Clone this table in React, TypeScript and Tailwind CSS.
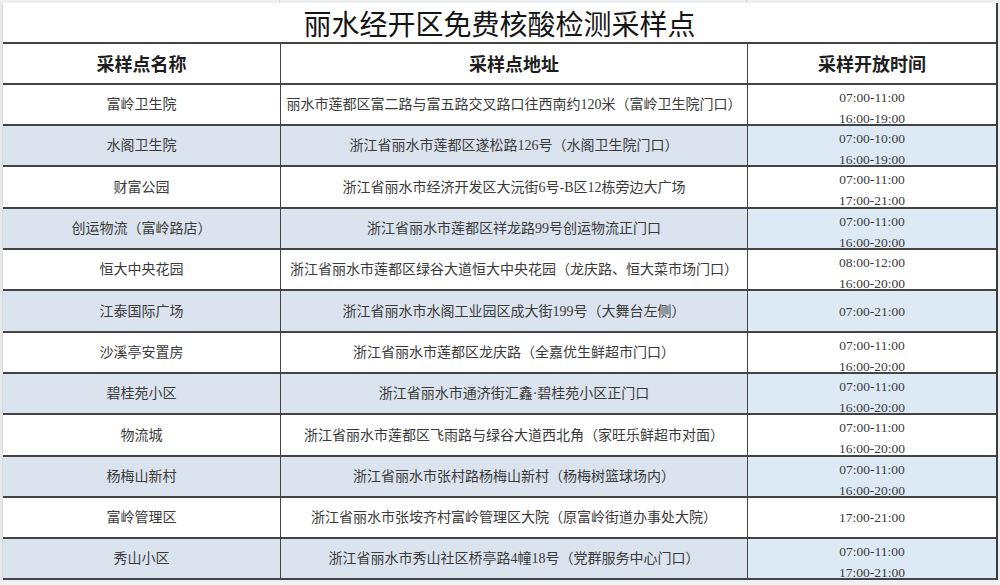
import React from "react";

type Row = { name: string; addr: string; times: string[] };

const rows: Row[] = [
  { name: "富岭卫生院", addr: "丽水市莲都区富二路与富五路交叉路口往西南约120米（富岭卫生院门口）", times: ["07:00-11:00", "16:00-19:00"] },
  { name: "水阁卫生院", addr: "浙江省丽水市莲都区遂松路126号（水阁卫生院门口）", times: ["07:00-10:00", "16:00-19:00"] },
  { name: "财富公园", addr: "浙江省丽水市经济开发区大沅街6号-B区12栋旁边大广场", times: ["07:00-11:00", "17:00-21:00"] },
  { name: "创运物流（富岭路店）", addr: "浙江省丽水市莲都区祥龙路99号创运物流正门口", times: ["07:00-11:00", "16:00-20:00"] },
  { name: "恒大中央花园", addr: "浙江省丽水市莲都区绿谷大道恒大中央花园（龙庆路、恒大菜市场门口）", times: ["08:00-12:00", "16:00-20:00"] },
  { name: "江泰国际广场", addr: "浙江省丽水市水阁工业园区成大街199号（大舞台左侧）", times: ["07:00-21:00"] },
  { name: "沙溪亭安置房", addr: "浙江省丽水市莲都区龙庆路（全嘉优生鲜超市门口）", times: ["07:00-11:00", "16:00-20:00"] },
  { name: "碧桂苑小区", addr: "浙江省丽水市通济街汇鑫·碧桂苑小区正门口", times: ["07:00-11:00", "16:00-20:00"] },
  { name: "物流城", addr: "浙江省丽水市莲都区飞雨路与绿谷大道西北角（家旺乐鲜超市对面）", times: ["07:00-11:00", "16:00-20:00"] },
  { name: "杨梅山新村", addr: "浙江省丽水市张村路杨梅山新村（杨梅树篮球场内）", times: ["07:00-11:00", "16:00-20:00"] },
  { name: "富岭管理区", addr: "浙江省丽水市张垵齐村富岭管理区大院（原富岭街道办事处大院）", times: ["17:00-21:00"] },
  { name: "秀山小区", addr: "浙江省丽水市秀山社区桥亭路4幢18号（党群服务中心门口）", times: ["07:00-11:00", "17:00-21:00"] },
];

const tall = [false, false, true, false, false, true, false, false, true, false, false, false];

const serif = "font-['Liberation_Serif','Noto_Sans_CJK_SC',serif]";
const sans = "font-['Noto_Sans_CJK_SC','Noto_Sans',sans-serif]";

export default function App() {
  return (
    <div className="w-[1000px] h-[585px] bg-[#eceef0] flex flex-col overflow-hidden">
      {/* spreadsheet top strip */}
      <div className="h-[3px] flex shrink-0">
        <div className="w-[280px] border-r border-[#d6d8db]" />
        <div className="w-[467px] border-r border-[#d6d8db]" />
        <div className="flex-1" />
      </div>
      <div className="flex shrink-0">
        <div className="w-[3px] shrink-0 border-r border-[#d9dbde] bg-[#e6e8ea]" />
        <div className="w-[995px] shrink-0 border-r-2 border-[#3c3c3c] bg-white flex flex-col">
          {/* title */}
          <div className="h-[41px] shrink-0 border-b-2 border-[#444] flex items-center justify-center">
            <span className={`${sans} text-[28px] leading-none text-[#151515] font-normal`}>丽水经开区免费核酸检测采样点</span>
          </div>
          {/* header */}
          <div className={`h-[41px] shrink-0 border-b-2 border-[#444] grid grid-cols-[277px_467px_1fr] grid-rows-[minmax(0,1fr)] ${sans} text-[18px] font-bold text-[#1e1e1e]`}>
            <div className="flex items-center justify-center">采样点名称</div>
            <div className="flex items-center justify-center border-l-[1.5px] border-[#444]">采样点地址</div>
            <div className="flex items-center justify-center border-l-[1.5px] border-[#444]">采样开放时间</div>
          </div>
          {rows.map((r, i) => {
            const blue = i % 2 === 1;
            const two = r.times.length > 1;
            return (
              <div
                key={i}
                className={`${tall[i] ? "h-[42px]" : "h-[41px]"} shrink-0 overflow-hidden border-b-2 border-[#444] grid grid-cols-[277px_467px_1fr] grid-rows-[minmax(0,1fr)] ${serif} text-[14px] text-[#3a3a3a]`}
              >
                <div className={`flex items-center justify-center whitespace-nowrap ${blue ? "bg-[#dbe3ee]" : ""}`}>{r.name}</div>
                <div className={`flex items-center justify-center whitespace-nowrap border-l-[1.5px] border-[#444] ${blue ? "bg-[#dbe3ee]" : ""}`}>{r.addr}</div>
                <div
                  className={`flex flex-col items-center leading-[21px] text-[13.5px] border-l-[1.5px] border-[#444] ${
                    two ? "justify-start pt-[1.5px]" : "justify-center"
                  } ${blue ? "bg-[#ddeaf6]" : ""}`}
                >
                  {r.times.map((t) => (
                    <span key={t}>{t}</span>
                  ))}
                </div>
              </div>
            );
          })}
        </div>
      </div>
      <div className="flex-1 bg-[#eef0f2]" />
    </div>
  );
}
